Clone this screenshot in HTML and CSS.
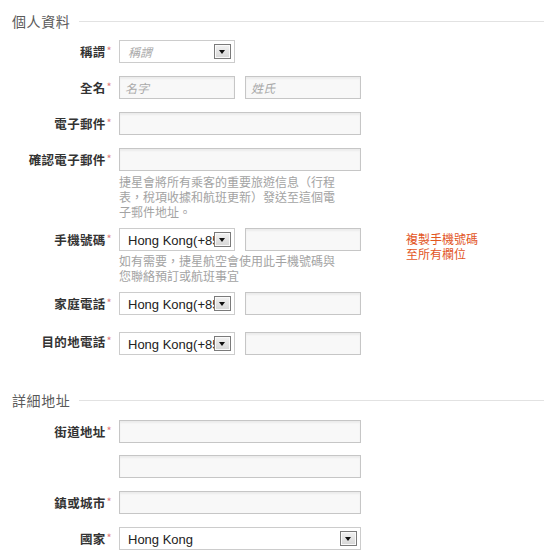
FILE: index.html
```html
<!DOCTYPE html>
<html lang="zh-Hant">
<head>
<meta charset="utf-8">
<title>個人資料</title>
<link rel="stylesheet" href="styles.css">
</head>
<body>
<form class="form">
  <section class="sec">
    <h2 class="sec-title"><span>個人資料</span></h2>

    <div class="row r-title">
      <label class="lbl">稱謂<i>*</i></label>
      <div class="field">
        <div class="select w-short"><span class="sel-text ph">稱謂</span><span class="arrow"></span></div>
      </div>
    </div>

    <div class="row r-name">
      <label class="lbl">全名<i>*</i></label>
      <div class="field pair">
        <input class="inp w-short" type="text" placeholder="名字">
        <input class="inp w-short" type="text" placeholder="姓氏">
      </div>
    </div>

    <div class="row r-email">
      <label class="lbl">電子郵件<i>*</i></label>
      <div class="field">
        <input class="inp w-long" type="text">
      </div>
    </div>

    <div class="row r-confirm">
      <label class="lbl">確認電子郵件<i>*</i></label>
      <div class="field col">
        <input class="inp w-long" type="text">
        <p class="help help-3">捷星會將所有乘客的重要旅遊信息（行程表，稅項收據和航班更新）發送至這個電子郵件地址。</p>
      </div>
    </div>

    <div class="row r-mobile">
      <label class="lbl">手機號碼<i>*</i></label>
      <div class="field">
        <div class="col">
          <div class="pair">
            <div class="select w-short"><span class="sel-text">Hong Kong(+852)</span><span class="arrow"></span></div>
            <input class="inp w-short" type="text">
          </div>
          <p class="help help-2">如有需要，捷星航空會使用此手機號碼與您聯絡預訂或航班事宜</p>
        </div>
        <a class="copy" href="#">複製手機號碼<br>至所有欄位</a>
      </div>
    </div>

    <div class="row r-home">
      <label class="lbl">家庭電話<i>*</i></label>
      <div class="field pair">
        <div class="select w-short"><span class="sel-text">Hong Kong(+852)</span><span class="arrow"></span></div>
        <input class="inp w-short" type="text">
      </div>
    </div>

    <div class="row r-dest">
      <label class="lbl lbl-up">目的地電話<i>*</i></label>
      <div class="field pair">
        <div class="select w-short"><span class="sel-text">Hong Kong(+852)</span><span class="arrow"></span></div>
        <input class="inp w-short" type="text">
      </div>
    </div>
  </section>

  <section class="sec sec-addr">
    <h2 class="sec-title"><span>詳細地址</span></h2>

    <div class="row r-street">
      <label class="lbl">街道地址<i>*</i></label>
      <div class="field"><input class="inp w-long" type="text"></div>
    </div>

    <div class="row r-street2">
      <span class="lbl"></span>
      <div class="field"><input class="inp w-long" type="text"></div>
    </div>

    <div class="row r-city">
      <label class="lbl">鎮或城市<i>*</i></label>
      <div class="field"><input class="inp w-long" type="text"></div>
    </div>

    <div class="row r-country">
      <label class="lbl">國家<i>*</i></label>
      <div class="field">
        <div class="select w-long"><span class="sel-text">Hong Kong</span><span class="arrow"></span></div>
      </div>
    </div>
  </section>
</form>
</body>
</html>
```

FILE: styles.css
```css
* { box-sizing: border-box; }

html, body {
  margin: 0;
  padding: 0;
  background: #ffffff;
}

body {
  font-family: "Liberation Sans", "Noto Sans CJK TC", sans-serif;
  color: #333333;
  font-size: 12px;
}

.form {
  padding-top: 11px;
}

.sec-title {
  display: flex;
  align-items: center;
  margin: 0;
  padding-left: 12px;
  height: 20px;
  overflow: hidden;
  font-family: "Noto Sans CJK TC", sans-serif;
  font-size: 14px;
  line-height: 20px;
  font-weight: normal;
  letter-spacing: 0.6px;
  color: #5a5a5a;
}

.sec-title::after {
  content: "";
  flex: 1;
  height: 1px;
  margin-left: 9px;
  background: #e2e2e2;
}

.sec > .sec-title { margin-bottom: 9px; }
.sec-addr { margin-top: 35px; }
.sec-addr > .sec-title { margin-bottom: 10px; }

.row {
  display: grid;
  grid-template-columns: 112px auto;
  column-gap: 7px;
  align-items: start;
}

.r-title, .r-name, .r-email { margin-bottom: 13px; }
.r-confirm { margin-bottom: 9px; }
.r-mobile { margin-bottom: 9px; }
.r-home { margin-bottom: 17px; }
.r-street { margin-bottom: 12px; }
.r-street2, .r-city { margin-bottom: 13px; }

.lbl {
  display: block;
  height: 23px;
  text-align: right;
  font-family: "Noto Sans CJK TC", sans-serif;
  font-weight: bold;
  font-size: 12.5px;
  letter-spacing: 0.3px;
  line-height: 23px;
  color: #333333;
  white-space: nowrap;
}

.lbl-up { line-height: 19px; }

.lbl i {
  font-style: normal;
  font-weight: normal;
  font-family: "Noto Sans CJK TC", sans-serif;
  font-size: 11px;
  line-height: 1;
  vertical-align: top;
  color: #e07a7a;
  margin-left: 1px;
  position: relative;
  top: 5px;
}

.lbl-up i { top: 3px; }

.field {
  display: flex;
  align-items: flex-start;
}

.col {
  display: flex;
  flex-direction: column;
}

.pair {
  display: flex;
  gap: 10px;
}

.w-short { width: 116px; }
.w-long { width: 242px; }

.inp {
  display: block;
  height: 23px;
  margin: 0;
  padding: 0 5px;
  border: 1px solid #c6c6c6;
  border-radius: 0;
  background: #f8f8f8;
  box-shadow: inset 0 2px 2px rgba(0, 0, 0, 0.05);
  font-family: "Noto Sans CJK TC", sans-serif;
  font-size: 12px;
  color: #333333;
  outline: none;
}

.inp::placeholder {
  color: #a9a9a9;
  font-style: italic;
}

.select {
  display: flex;
  align-items: center;
  height: 23px;
  padding: 0 3px 0 8px;
  border: 1px solid #cccccc;
  background: #ffffff;
  overflow: hidden;
}

.sel-text {
  flex: 1;
  min-width: 0;
  overflow: hidden;
  white-space: nowrap;
  font-family: "Liberation Sans", sans-serif;
  font-size: 13px;
  line-height: 16px;
  padding-top: 2px;
  color: #222222;
}

.sel-text.ph {
  padding-top: 0;
  font-family: "Noto Sans CJK TC", sans-serif;
  font-size: 12px;
  font-style: italic;
  color: #a9a9a9;
}

.arrow {
  flex: none;
  position: relative;
  width: 17px;
  height: 15px;
  border: 1px solid #7a7a7a;
  background: linear-gradient(#f2f2f2, #d6d6d6);
  box-shadow: inset 0 0 0 1px #fafafa;
}

.arrow::after {
  content: "";
  position: absolute;
  left: 4px;
  top: 5px;
  border-left: 3.5px solid transparent;
  border-right: 3.5px solid transparent;
  border-top: 4px solid #111111;
}

.help {
  margin: 0;
  width: 222px;
  font-family: "Noto Sans CJK TC", sans-serif;
  font-size: 12px;
  line-height: 15px;
  color: #a3a3a3;
}

.help-3 { margin-top: 3px; }
.help-2 { margin-top: 2px; }

.copy {
  display: block;
  margin-left: 45px;
  margin-top: 3px;
  font-family: "Noto Sans CJK TC", sans-serif;
  font-size: 12px;
  line-height: 15px;
  color: #e2551e;
  text-decoration: none;
  white-space: nowrap;
}
```
